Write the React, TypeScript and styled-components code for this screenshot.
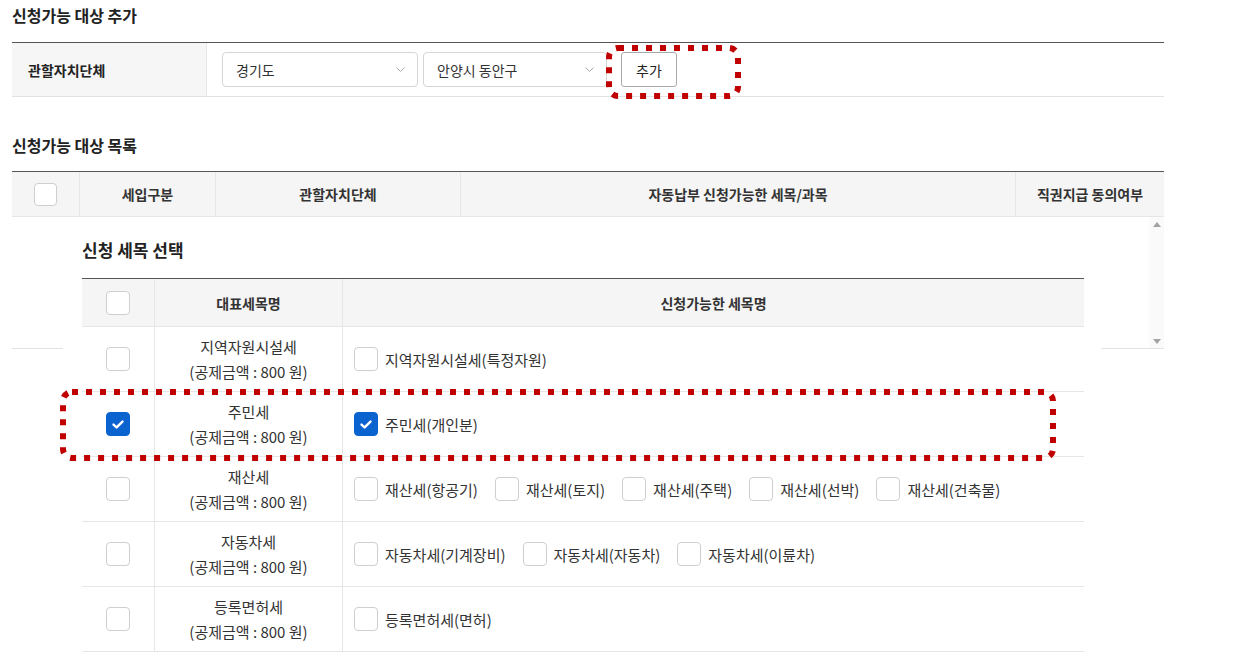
import React from 'react';
import styled, { createGlobalStyle } from 'styled-components';

const GlobalStyle = createGlobalStyle`
  body {
    margin: 0;
    background: #fff;
    font-family: "Noto Sans CJK KR", "Noto Sans", sans-serif;
    color: #333;
  }
`;

const Page = styled.div`
  position: relative;
  width: 1152px;
  padding: 0 12px;
  height: 668px;
  overflow: hidden;
`;

const Title = styled.h2<{ $top: number }>`
  margin: ${p => p.$top}px 0 0;
  font-size: 16px;
  line-height: 22px;
  font-weight: 700;
  color: #222;
`;

const FormTable = styled.div`
  margin-top: 16px;
  border-top: 1px solid #555;
  border-bottom: 1px solid #e2e2e2;
  display: grid;
  grid-template-columns: 195px 1fr;
  height: 53px;
`;

const LabelCell = styled.div`
  background: #f6f6f6;
  border-right: 1px solid #e6e6e6;
  display: flex;
  align-items: center;
  padding-left: 16px;
  font-size: 14px;
  font-weight: 700;
  color: #222;
`;

const FieldCell = styled.div`
  display: flex;
  align-items: center;
  gap: 5px;
  padding-left: 15px;
`;

const Select = styled.div<{ $w: number }>`
  width: ${p => p.$w}px;
  height: 35px;
  box-sizing: border-box;
  border: 1px solid #d6d6d6;
  border-radius: 4px;
  display: flex;
  align-items: center;
  justify-content: space-between;
  padding: 0 12px 0 13px;
  font-size: 14px;
  color: #333;
`;

const Button = styled.button`
  margin-left: 9px;
  height: 35px;
  width: 56px;
  border: 1px solid #aaa;
  border-radius: 3px;
  background: #fff;
  font-family: inherit;
  font-size: 14px;
  color: #222;
`;

const ListTable = styled.div`
  margin-top: 15px;
  border-top: 1px solid #555;
`;

const HeadRow = styled.div<{ $cols: string; $h: number }>`
  display: grid;
  grid-template-columns: ${p => p.$cols};
  height: ${p => p.$h}px;
  background: #f5f5f5;
  border-bottom: 1px solid #e6e6e6;
`;

const HeadCell = styled.div<{ $last?: boolean }>`
  display: flex;
  align-items: center;
  justify-content: center;
  font-size: 14px;
  font-weight: 700;
  color: #333;
  border-right: ${p => (p.$last ? 'none' : '1px solid #e6e6e6')};
`;

const ScrollBody = styled.div`
  height: 131px;
  border-bottom: 1px solid #e2e2e2;
  display: flex;
  justify-content: flex-end;
`;

const ScrollTrack = styled.div`
  width: 15px;
  background: #fafafa;
  display: flex;
  flex-direction: column;
  justify-content: space-between;
  align-items: center;
  padding: 5px 0 4px;
`;

const Arrow = styled.div<{ $down?: boolean }>`
  width: 0;
  height: 0;
  border-left: 4px solid transparent;
  border-right: 4px solid transparent;
  ${p => (p.$down ? 'border-top: 5px solid #a3a3a3;' : 'border-bottom: 5px solid #a3a3a3;')}
`;

const Box = styled.span<{ $size: number; $checked?: boolean }>`
  width: ${p => p.$size}px;
  height: ${p => p.$size}px;
  box-sizing: border-box;
  border-radius: 4px;
  border: 1px solid ${p => (p.$checked ? '#0b63d0' : '#cfcfcf')};
  background: ${p => (p.$checked ? '#0b63d0' : '#fff')};
  display: inline-flex;
  align-items: center;
  justify-content: center;
  flex-shrink: 0;
`;

const Popup = styled.div`
  position: absolute;
  left: 63px;
  top: 222px;
  width: 1002px;
  padding: 17px 17px 40px 19px;
  background: #fff;
`;

const PopupTitle = styled.h3`
  margin: 0;
  font-size: 17px;
  line-height: 22px;
  font-weight: 700;
  color: #222;
`;

const TaxTable = styled.div`
  margin-top: 17px;
  border-top: 1px solid #555;
`;

const TaxRow = styled.div`
  display: grid;
  grid-template-columns: 73px 188px 1fr;
  height: 64px;
  border-bottom: 1px solid #e6e6e6;
`;

const CheckCell = styled.div`
  display: flex;
  align-items: center;
  justify-content: center;
  border-right: 1px solid #e6e6e6;
`;

const NameCell = styled.div`
  display: flex;
  flex-direction: column;
  align-items: center;
  justify-content: center;
  border-right: 1px solid #e6e6e6;
  font-size: 15px;
  line-height: 25px;
  color: #333;
`;

const OptionCell = styled.div`
  display: flex;
  align-items: center;
  gap: 17px;
  padding-left: 11px;
`;

const Option = styled.label`
  display: inline-flex;
  align-items: center;
  gap: 7px;
  font-size: 15px;
  color: #333;
`;

const Highlight = styled.svg`
  position: absolute;
  overflow: visible;
  pointer-events: none;
`;

const Check = () => (
  <svg width="14" height="11" viewBox="0 0 14 11">
    <path d="M2.5 5.6 L5.6 8.4 L11.5 2.6" fill="none" stroke="#fff" strokeWidth="2.4" strokeLinecap="round" strokeLinejoin="round" />
  </svg>
);

const Chevron = () => (
  <svg width="9" height="5" viewBox="0 0 9 5">
    <path d="M0.5 0.5 L4.5 4.5 L8.5 0.5" fill="none" stroke="#a8a8a8" strokeWidth="1" />
  </svg>
);

const Dotted = ({ x, y, w, h }: { x: number; y: number; w: number; h: number }) => (
  <Highlight style={{ left: x, top: y }} width={w} height={h}>
    <rect x="3" y="3" width={w - 6} height={h - 6} rx="9" fill="none" stroke="#c00000" strokeWidth="6" strokeDasharray="6 8" />
  </Highlight>
);

const taxes = [
  { name: '지역자원시설세', checked: false, items: ['지역자원시설세(특정자원)'] },
  { name: '주민세', checked: true, items: ['주민세(개인분)'] },
  { name: '재산세', checked: false, items: ['재산세(항공기)', '재산세(토지)', '재산세(주택)', '재산세(선박)', '재산세(건축물)'] },
  { name: '자동차세', checked: false, items: ['자동차세(기계장비)', '자동차세(자동차)', '자동차세(이륜차)'] },
  { name: '등록면허세', checked: false, items: ['등록면허세(면허)'] },
];

export default function App() {
  return (
    <>
      <GlobalStyle />
      <Page>
        <Title $top={4}>신청가능 대상 추가</Title>
        <FormTable>
          <LabelCell>관할자치단체</LabelCell>
          <FieldCell>
            <Select $w={196}>
              경기도
              <Chevron />
            </Select>
            <Select $w={184}>
              안양시 동안구
              <Chevron />
            </Select>
            <Button>추가</Button>
          </FieldCell>
        </FormTable>

        <Title $top={37}>신청가능 대상 목록</Title>
        <ListTable>
          <HeadRow $cols="68px 136px 245px 555px 1fr" $h={44}>
            <HeadCell>
              <Box $size={23} />
            </HeadCell>
            <HeadCell>세입구분</HeadCell>
            <HeadCell>관할자치단체</HeadCell>
            <HeadCell>자동납부 신청가능한 세목/과목</HeadCell>
            <HeadCell $last>직권지급 동의여부</HeadCell>
          </HeadRow>
          <ScrollBody>
            <ScrollTrack>
              <Arrow />
              <Arrow $down />
            </ScrollTrack>
          </ScrollBody>
        </ListTable>

        <Popup>
          <PopupTitle>신청 세목 선택</PopupTitle>
          <TaxTable>
            <HeadRow $cols="73px 188px 1fr" $h={47}>
              <HeadCell>
                <Box $size={24} />
              </HeadCell>
              <HeadCell>대표세목명</HeadCell>
              <HeadCell $last>신청가능한 세목명</HeadCell>
            </HeadRow>
            {taxes.map(t => (
              <TaxRow key={t.name}>
                <CheckCell>
                  <Box $size={24} $checked={t.checked}>{t.checked && <Check />}</Box>
                </CheckCell>
                <NameCell>
                  <span>{t.name}</span>
                  <span>(공제금액 : 800 원)</span>
                </NameCell>
                <OptionCell>
                  {t.items.map(item => (
                    <Option key={item}>
                      <Box $size={24} $checked={t.checked}>{t.checked && <Check />}</Box>
                      {item}
                    </Option>
                  ))}
                </OptionCell>
              </TaxRow>
            ))}
          </TaxTable>
        </Popup>

        <Dotted x={606} y={45} w={135} h={54} />
        <Dotted x={60} y={389} w={996} h={72} />
      </Page>
    </>
  );
}
